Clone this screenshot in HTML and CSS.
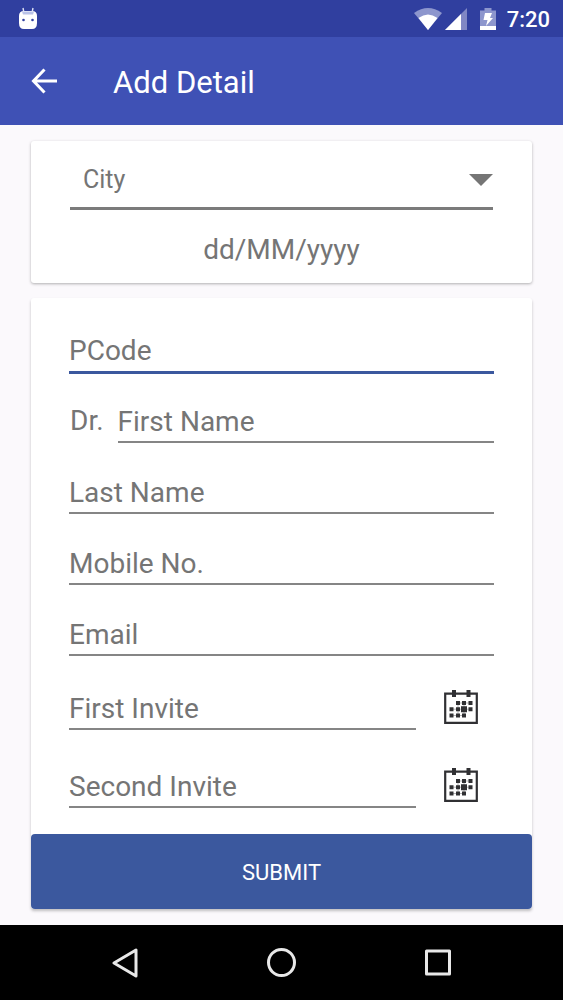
FILE: index.html
```html
<!DOCTYPE html>
<html lang="en">
<head>
<meta charset="utf-8">
<meta name="viewport" content="width=device-width, initial-scale=1">
<title>Add Detail</title>
<link rel="stylesheet" href="styles.css">
</head>
<body class="screen">
<div class="status-bar">
  <svg class="status-droid" width="20" height="24" viewBox="0 0 20 24" aria-hidden="true">
    <path d="M5 1l1 5M15 1l-1 5" stroke="#dfe3f5" stroke-width="1.4"/>
    <path d="M1 9q0-5 5-5h8q5 0 5 5v7q0 6-5 6H6q-5 0-5-6z" fill="#fff"/>
    <path d="M4 4.500h12l-1 3H5z" fill="#b9c2e8"/>
    <circle cx="5.500" cy="13" r="1.300" fill="#303f9f"/><circle cx="14.500" cy="13" r="1.300" fill="#303f9f"/>
  </svg>
  <div class="status-icons">
    <svg width="28" height="24" viewBox="0 0 28 24" aria-hidden="true">
      <path d="M0 6Q14-4 28 6L14 23z" fill="#8d96cd"/>
      <path d="M4.500 11Q14 4 23.500 11L14 23z" fill="#fff"/>
    </svg>
    <svg width="22" height="24" viewBox="0 0 22 24" aria-hidden="true">
      <path d="M22 1v22H0z" fill="#8087c4"/>
      <path d="M16 7v16H0z" fill="#fff"/>
    </svg>
    <svg class="status-battery" width="16" height="24" viewBox="0 0 16 24" aria-hidden="true">
      <path d="M0 3.500h4.500V1h7v2.500H16V23H0z" fill="#8d96cd"/>
      <path d="M0 19h16v4H0z" fill="#fff"/>
      <path d="M5 6h7l-2 5h3L6 19l1.500-6H3.500z" fill="#fff"/>
    </svg>
    <span class="clock">7:20</span>
  </div>
</div>
<header class="app-bar">
  <button class="back" type="button" aria-label="Back">
    <svg width="26" height="26" viewBox="0 0 26 26" fill="none" stroke="#fff" stroke-width="3" aria-hidden="true"><path d="M13.500 1.500L2.500 13l11 11.500M2.500 13H26"/></svg>
  </button>
  <h1 class="title">Add Detail</h1>
</header>
<form class="content">
  <section class="card summary">
    <div class="picker">
      <select class="city" aria-label="City"><option>City</option></select>
      <svg class="caret" width="24" height="12" viewBox="0 0 24 12" aria-hidden="true"><path d="M0 0h24L12 12z" fill="#757575"/></svg>
    </div>
    <input class="date" type="text" placeholder="dd/MM/yyyy" aria-label="Date">
  </section>
  <section class="card details">
    <div class="fields">
      <input class="field active" type="text" placeholder="PCode" aria-label="PCode">
      <div class="name-row">
        <label class="prefix" for="first-name">Dr.</label>
        <input class="field" id="first-name" type="text" placeholder="First Name">
      </div>
      <input class="field" type="text" placeholder="Last Name" aria-label="Last Name">
      <input class="field" type="tel" placeholder="Mobile No." aria-label="Mobile No.">
      <input class="field" type="email" placeholder="Email" aria-label="Email">
      <div class="invites">
        <div class="invite">
          <input class="field" type="text" placeholder="First Invite" aria-label="First Invite">
          <button class="calendar" type="button" aria-label="Pick first invite date">
            <svg width="34" height="34" viewBox="0 0 34 34" aria-hidden="true"><g id="calendar">
              <path d="M1.200 3.700h31.600v29.100H1.200z" fill="none" stroke="#303033" stroke-width="2.200"/>
              <path d="M8 0h4v7H8zM22.500 0h4v7h-4z" fill="#303033"/>
              <path d="M12 11h4v4h-4zM18 11h4v4h-4zM24.500 11h4v4h-4zM5.500 17.200h4v4h-4zM12 17.200h4v4h-4zM17 16.200h6v6h-6zM24.500 17.200h4v4h-4zM5.500 23.500h4v4h-4zM12 23.500h4v4h-4zM18 23.500h4v4h-4z" fill="#303033"/>
              <path d="M14 13h12M7 19.200h19M7 25.500h12M14 12v14M20 12v14" stroke="#303033" stroke-width="1" opacity=".35"/>
            </g></svg>
          </button>
        </div>
        <div class="invite">
          <input class="field" type="text" placeholder="Second Invite" aria-label="Second Invite">
          <button class="calendar" type="button" aria-label="Pick second invite date">
            <svg width="34" height="34" viewBox="0 0 34 34" aria-hidden="true"><use href="#calendar"/></svg>
          </button>
        </div>
      </div>
    </div>
    <button class="submit" type="submit">SUBMIT</button>
  </section>
</form>
<nav class="nav-bar" aria-label="System">
  <button class="nav-key" type="button" aria-label="Back">
    <svg width="30" height="30" viewBox="0 0 30 30" fill="none" stroke="#e8e8e8" stroke-width="3" stroke-linejoin="round" aria-hidden="true"><path d="M25 2v26L3 15z"/></svg>
  </button>
  <button class="nav-key" type="button" aria-label="Home">
    <svg width="30" height="30" viewBox="0 0 30 30" fill="none" stroke="#e8e8e8" stroke-width="3" aria-hidden="true"><circle cx="14.500" cy="14.500" r="13"/></svg>
  </button>
  <button class="nav-key" type="button" aria-label="Recent apps">
    <svg width="30" height="30" viewBox="0 0 30 30" fill="none" stroke="#e8e8e8" stroke-width="3" stroke-linejoin="round" aria-hidden="true"><path d="M3.500 3h23v23h-23z"/></svg>
  </button>
</nav>
</body>
</html>
```
FILE: styles.css
```css
* { box-sizing: border-box; }

.screen {
  margin: 0;
  min-height: 100vh;
  display: flex;
  flex-direction: column;
  background: #fbf9fc;
  color: #757575;
  font-family: Roboto, sans-serif;
}

button, input, select {
  margin: 0;
  padding: 0;
  border: 0;
  border-radius: 0;
  background: none;
  color: inherit;
  font-family: inherit;
  outline: none;
}

svg { display: block; }

.status-bar {
  display: flex;
  align-items: center;
  justify-content: space-between;
  height: 37px;
  padding: 0 13px 0 18px;
  background: #303f9f;
  color: #fff;
}

.status-icons { display: flex; align-items: center; gap: 3px; }
.status-battery { margin-left: 10px; }
.clock { margin-left: 8px; padding-top: 2px; font-size: 22px; line-height: 35px; font-weight: 500; }

.app-bar {
  display: flex;
  align-items: center;
  gap: 56px;
  height: 88px;
  padding: 0 31px;
  background: #3f51b5;
  color: #fff;
}

.title { margin: 0; padding-top: 4px; font-size: 31px; line-height: 40px; font-weight: 400; }

.content {
  flex: 1;
  display: flex;
  flex-direction: column;
  gap: 15px;
  padding: 16px 31px;
}

.card {
  border-radius: 3px;
  background: #fff;
  box-shadow: 0 1px 3px rgba(0, 0, 0, 0.3);
}

.summary { display: flex; flex-direction: column; padding: 16px 39px 9px; }
.picker { position: relative; }

.city {
  appearance: none;
  display: block;
  width: 100%;
  height: 53px;
  padding: 0 40px 6px 13px;
  border-bottom: 3px solid #7b7b7b;
  font-size: 25px;
}

.caret { position: absolute; top: 17px; right: 0; pointer-events: none; }

.date { width: 100%; height: 64px; padding-top: 15px; font-size: 28px; text-align: center; }

::placeholder { color: #757575; opacity: 1; }

.details {
  display: flex;
  flex-direction: column;
  justify-content: space-between;
  flex: 1;
  box-shadow: 0 2px 3px rgba(0, 0, 0, 0.24);
}

.fields { display: flex; flex-direction: column; gap: 17px; padding: 22px 38px 26px; }

.field {
  width: 100%;
  min-width: 0;
  height: 54px;
  padding-top: 12px;
  border-bottom: 2px solid #858585;
  font-size: 28px;
}

.active { margin-bottom: -2px; padding-top: 10px; border-bottom: 3px solid #3b589e; }

.name-row { display: flex; align-items: center; gap: 14px; padding-left: 1px; }
.prefix { padding-top: 10px; font-size: 28px; line-height: 32px; }

.invites { display: flex; flex-direction: column; gap: 24px; padding-top: 3px; }
.invite { display: flex; align-items: center; gap: 28px; padding-right: 16px; }
.calendar { padding-top: 8px; }

.submit {
  height: 75px;
  padding-top: 2px;
  border-radius: 4px;
  background: #3b589e;
  color: #fff;
  font-size: 22px;
}

.nav-bar {
  display: flex;
  align-items: center;
  justify-content: center;
  height: 75px;
  background: #000;
}

.nav-key { display: flex; justify-content: center; width: 156px; }
```
